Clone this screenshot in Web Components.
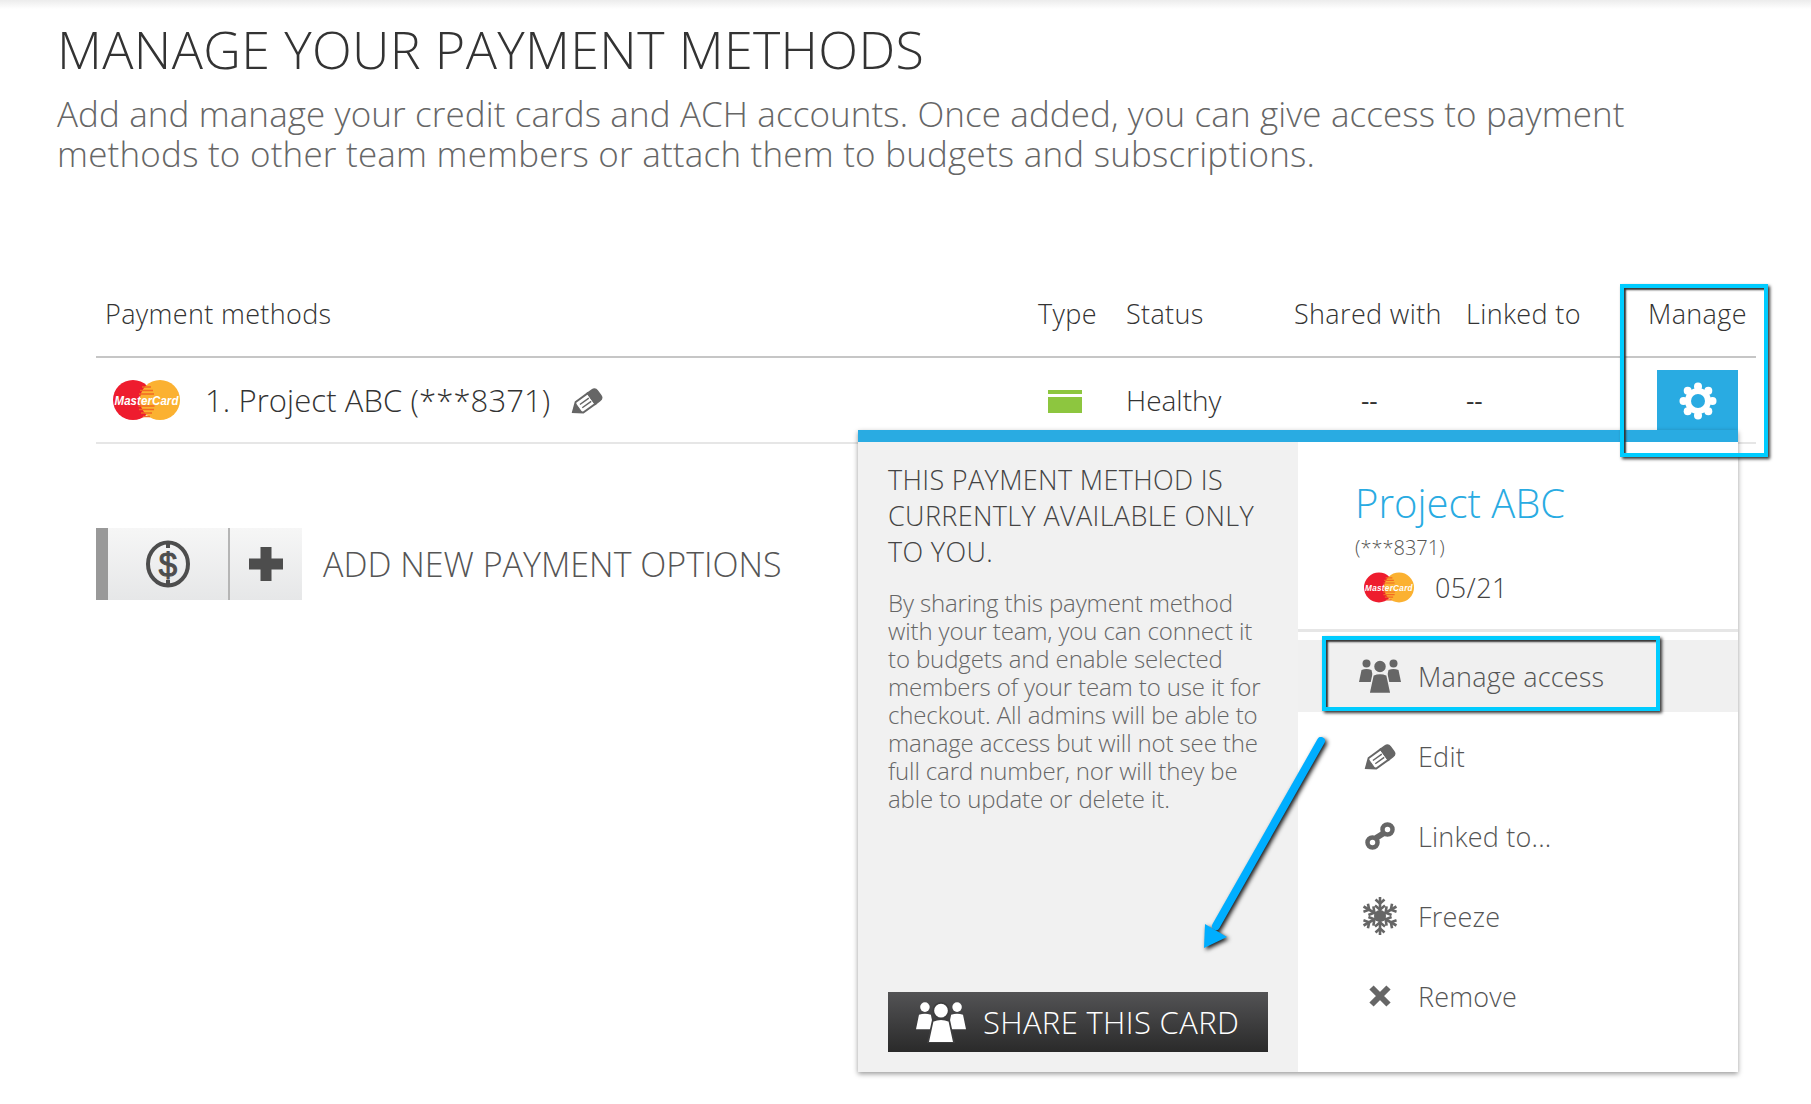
<!DOCTYPE html>
<html lang="en">
<head>
<meta charset="utf-8">
<title>Manage your payment methods</title>
<style>
  html, body { margin: 0; background: #fff; }
  body { font-family: "Open Sans", "Noto Sans", sans-serif; }
</style>
</head>
<body>
<payment-page>
  <page-header slot="header" title="MANAGE YOUR PAYMENT METHODS">
    Add and manage your credit cards and ACH accounts. Once added, you can give access to payment<br><span style="letter-spacing:0.21px">methods to other team members or attach them to budgets and subscriptions.</span>
  </page-header>
  <payment-table slot="table"></payment-table>
  <add-payment slot="add"></add-payment>
  <manage-panel slot="over"></manage-panel>
  <call-out slot="over" style="left:1620px;top:284px;width:148px;height:173px"></call-out>
  <call-out slot="over" style="left:1322px;top:636px;width:338px;height:75px"></call-out>
  <call-arrow slot="over"></call-arrow>
</payment-page>

<script>
const ICONS = {
  pencil: `<svg viewBox="0 0 32 27" width="32" height="27"><g transform="translate(2 25) rotate(-36)" stroke="currentColor" stroke-width="2" fill="none"><path d="M0 0 L8 -6.500 H23 V6.500 H8 Z"/><path d="M0 0 L7 -5 V5 Z" fill="currentColor" stroke-width="1"/><path d="M23 -6.500 H28 Q32 -6.500 32 -3 V3 Q32 6.500 28 6.500 H23 Z" fill="currentColor"/><path d="M10 -2 H21 M10 2 H21" stroke-width="1.500"/></g></svg>`,
  people: `<svg viewBox="0 0 42 34" width="100%" height="100%"><g fill="currentColor"><circle cx="7.500" cy="4.500" r="4"/><circle cx="34.500" cy="4.500" r="4"/><path d="M2.500 11 Q7.500 9 12.500 11 L15 23 H0 Z"/><path d="M29.500 11 Q34.500 9 39.500 11 L42 23 H27 Z"/><g stroke="var(--gap, #fff)" stroke-width="1.500"><circle cx="21" cy="7.500" r="6.500"/><path d="M14 16 Q21 13 28 16 L32 34.500 H10 Z"/></g></g></svg>`,
  link: `<svg viewBox="0 0 30 28" width="30" height="28"><g fill="none" stroke="currentColor" stroke-width="4.500"><circle cx="7.500" cy="20.500" r="5"/><circle cx="22.500" cy="7.500" r="5"/><path d="M11 16 L19 11" stroke-width="6"/></g></svg>`,
  snow: `<svg viewBox="-18 -20 36 40" width="36" height="40"><defs><g id="arm" fill="none" stroke="currentColor" stroke-width="2.600"><path d="M0 0 V-19"/><path d="M-4.500 -16.500 L0 -12.500 L4.500 -16.500"/><path d="M-5 -10.500 L0 -6.500 L5 -10.500"/></g></defs><use href="#arm"/><use href="#arm" transform="rotate(60)"/><use href="#arm" transform="rotate(120)"/><use href="#arm" transform="rotate(180)"/><use href="#arm" transform="rotate(240)"/><use href="#arm" transform="rotate(300)"/><circle r="6" fill="currentColor"/></svg>`,
  cross: `<svg viewBox="0 0 22 22" width="22" height="22"><path d="M2.500 2.500 L19.500 19.500 M19.500 2.500 L2.500 19.500" stroke="currentColor" stroke-width="6"/></svg>`,
  gear: `<svg viewBox="-19 -19 38 38" width="38" height="38"><g fill="#fff"><circle r="13"/><circle cy="-14.500" r="4"/><circle cy="14.500" r="4"/><circle cx="-14.500" r="4"/><circle cx="14.500" r="4"/><circle cx="-10.300" cy="-10.300" r="4"/><circle cx="10.300" cy="-10.300" r="4"/><circle cx="-10.300" cy="10.300" r="4"/><circle cx="10.300" cy="10.300" r="4"/></g><circle r="7" fill="#29abe2"/></svg>`,
};

class PmIcon extends HTMLElement {
  connectedCallback() {
    if (this.shadowRoot) return;
    this.attachShadow({ mode: "open" }).innerHTML = `
      <style>:host{ display:inline-flex; align-items:center; justify-content:center; color:#666; line-height:0; }</style>
      ${ICONS[this.getAttribute("name")] || ""}`;
  }
}
customElements.define("pm-icon", PmIcon);

class McLogo extends HTMLElement {
  connectedCallback() {
    if (this.shadowRoot) return;
    this.attachShadow({ mode: "open" }).innerHTML = `
      <style>:host{ display:inline-block; line-height:0; } svg{ width:100%; height:100%; overflow:visible; }</style>
      <svg viewBox="0 0 67 40">
        <circle cx="20" cy="20" r="20" fill="#ee1c2e"/>
        <circle cx="47" cy="20" r="20" fill="#fbb131"/>
        <g stroke="#f26a22" stroke-width="1.600">
          <path d="M29 7 H38 M27 10.500 H40 M26 14 H41 M25.500 26 H41.500 M26 29.500 H41 M28 33 H39 M30 36.500 H37"/>
        </g>
        <text x="33.500" y="25" text-anchor="middle" textLength="64" lengthAdjust="spacingAndGlyphs"
          font-family="Liberation Sans, sans-serif" font-size="13" font-weight="700" font-style="italic" fill="#fff">MasterCard</text>
      </svg>`;
  }
}
customElements.define("mc-logo", McLogo);

class PaymentPage extends HTMLElement {
  constructor() {
    super();
    this.attachShadow({ mode: "open" }).innerHTML = `
      <style>
        :host{ display:block; position:relative; height:1104px; overflow:hidden;
          background:linear-gradient(#ececec, #fff 9px) no-repeat; background-size:100% 10px; }
        .table{ padding:284px 55px 0 96px; }
        .add{ padding:84px 0 0 96px; }
      </style>
      <slot name="header"></slot>
      <div class="table"><slot name="table"></slot></div>
      <div class="add"><slot name="add"></slot></div>
      <slot name="over"></slot>`;
  }
}
customElements.define("payment-page", PaymentPage);

class PageHeader extends HTMLElement {
  constructor() {
    super();
    this.attachShadow({ mode: "open" }).innerHTML = `
      <style>
        :host{ display:block; position:absolute; left:57px; top:18px; right:0; }
        h1{ margin:0; font-size:52px; line-height:62px; font-weight:300; color:#333; letter-spacing:0.35px; white-space:nowrap; }
        p{ margin:0; padding-top:14px; font-size:35px; line-height:40px; font-weight:300; color:#666; letter-spacing:0.1px; white-space:nowrap; }
      </style>
      <h1></h1>
      <p><slot></slot></p>`;
  }
  connectedCallback() {
    this.shadowRoot.querySelector("h1").textContent = this.getAttribute("title");
  }
}
customElements.define("page-header", PageHeader);

class PaymentTable extends HTMLElement {
  constructor() {
    super();
    this.attachShadow({ mode: "open" }).innerHTML = `
      <style>
        :host{ display:block; color:#333; font-weight:300; }
        .row{ display:grid; grid-template-columns:942px 88px 168px 172px 182px 108px; align-items:center; }
        .head{ height:72px; border-bottom:2px solid #c6c6c6; font-size:27px; letter-spacing:0.35px; }
        .head > div{ padding-bottom:13px; white-space:nowrap; }
        .body{ height:84px; border-bottom:2px solid #e6e6e6; font-size:28px; }
        .first{ padding-left:9px; }
        .name{ display:flex; align-items:center; padding-left:17px; font-size:31px; letter-spacing:0.1px; white-space:nowrap; }
        mc-logo{ width:67px; height:40px; margin-right:25px; }
        .name pm-icon{ margin-left:21px; }
        .type{ padding-left:10px; }
        .swatch{ display:block; margin-top:3px; width:34px; height:23px; background:linear-gradient(#8dc63f 4px, #fff 4px, #fff 7px, #8dc63f 7px); }
        .dash{ font-weight:400; font-size:26px; }
        .shared{ padding-left:67px; }
        .gear{ align-self:start; margin:12px 0 0 9px; width:81px; height:72px; background:#29abe2; display:flex; justify-content:center; align-items:flex-start; padding-top:12px; box-sizing:border-box; }
      </style>
      <div class="row head">
        <div class="first">Payment methods</div><div>Type</div><div>Status</div><div>Shared with</div><div>Linked to</div><div>Manage</div>
      </div>
      <div class="row body">
        <div class="name"><mc-logo></mc-logo>1. Project ABC (***8371)<pm-icon name="pencil"></pm-icon></div>
        <div class="type"><span class="swatch"></span></div>
        <div>Healthy</div>
        <div class="dash shared">--</div>
        <div class="dash">--</div>
        <div class="gear"><pm-icon name="gear"></pm-icon></div>
      </div>`;
  }
}
customElements.define("payment-table", PaymentTable);

class AddPayment extends HTMLElement {
  constructor() {
    super();
    this.attachShadow({ mode: "open" }).innerHTML = `
      <style>
        :host{ display:flex; align-items:center; height:72px; color:#555; }
        .btn{ display:flex; height:72px; width:206px; box-sizing:border-box; border-left:12px solid #999; background:linear-gradient(#f6f6f6, #e6e7e8); color:#4d4d4d; }
        .coin{ width:120px; border-right:2px solid #b5b5b5; display:flex; align-items:center; justify-content:center; }
        .plus{ flex:1; display:flex; align-items:center; justify-content:center; }
        .label{ margin-left:21px; font-size:34px; font-weight:300; white-space:nowrap; }
        svg text{ font-family:"Liberation Sans", sans-serif; font-weight:400; }
      </style>
      <div class="btn">
        <div class="coin"><svg width="46" height="48" viewBox="0 0 46 48"><ellipse cx="23" cy="24" rx="20" ry="21.500" fill="none" stroke="currentColor" stroke-width="4"/><path d="M23 2 V8 M23 40 V46" stroke="currentColor" stroke-width="4"/><text x="23" y="36" font-size="33" text-anchor="middle" fill="currentColor" stroke="currentColor" stroke-width="1">$</text></svg></div>
        <div class="plus"><svg width="34" height="34" viewBox="0 0 34 34"><path d="M11.500 0 H22.500 V11.500 H34 V22.500 H22.500 V34 H11.500 V22.500 H0 V11.500 H11.500 Z" fill="currentColor"/></svg></div>
      </div>
      <span class="label">ADD NEW PAYMENT OPTIONS</span>`;
  }
}
customElements.define("add-payment", AddPayment);

class MenuItem extends HTMLElement {
  constructor() {
    super();
    this.attachShadow({ mode: "open" }).innerHTML = `
      <style>
        :host{ display:flex; align-items:center; height:72px; padding-left:52px; font-size:27px; letter-spacing:0.2px; font-weight:300; color:#555; }
        :host([active]){ background:#f0f0f0; }
        .ic{ width:60px; height:42px; display:flex; align-items:center; justify-content:center; margin-right:8px; }
      </style>
      <div class="ic"><slot name="icon"></slot></div>
      <slot></slot>`;
  }
}
customElements.define("menu-item", MenuItem);

class ManagePanel extends HTMLElement {
  constructor() {
    super();
    this.attachShadow({ mode: "open" }).innerHTML = `
      <style>
        :host{ display:flex; position:absolute; left:858px; top:430px; width:880px; height:642px; box-sizing:border-box;
          border-top:12px solid #29abe2; background:#fff; box-shadow:0 2px 5px rgba(0,0,0,.4); }
        .left{ width:440px; background:#f1f1f1; box-sizing:border-box; padding:20px 30px 20px; display:flex; flex-direction:column; }
        h2{ margin:0; font-size:27px; line-height:36px; font-weight:300; color:#444; letter-spacing:0.35px; white-space:nowrap; }
        p{ margin:19px 0 0; font-size:24px; line-height:28px; font-weight:300; color:#666; letter-spacing:-0.13px; white-space:nowrap; }
        .share{ margin-top:auto; height:60px; width:380px; box-sizing:border-box; padding-left:28px; display:flex; align-items:center;
          background:linear-gradient(#535355, #2a2a2a); color:#fff; font-size:31px; font-weight:300; letter-spacing:0.35px; white-space:nowrap; }
        .share pm-icon{ width:50px; height:42px; margin-right:17px; color:#fff; --gap:#3d3d3e; }
        .right{ flex:1; }
        .head{ border-bottom:3px solid #e6e6e6; padding:39px 0 0 57px; height:148px; }
        .title{ font-size:40px; line-height:44px; font-weight:300; color:#29abe2; white-space:nowrap; }
        .num{ margin-top:10px; font-size:20px; line-height:26px; font-weight:300; color:#555; }
        .exp{ margin-top:8px; display:flex; align-items:center; padding-left:9px; font-size:27px; letter-spacing:0.4px; font-weight:300; color:#444; }
        .exp mc-logo{ width:50px; height:31px; margin-right:21px; }
        .menu{ margin-top:8px; display:flex; flex-direction:column; gap:8px; }
        .big{ width:42px; height:34px; }
      </style>
      <div class="left">
        <h2>THIS PAYMENT METHOD IS<br>CURRENTLY AVAILABLE ONLY<br>TO YOU.</h2>
        <p>By sharing this payment method<br>with your team, you can connect it<br>to budgets and enable selected<br>members of your team to use it for<br>checkout. All admins will be able to<br>manage access but will not see the<br>full card number, nor will they be<br>able to update or delete it.</p>
        <div class="share"><pm-icon name="people"></pm-icon>SHARE THIS CARD</div>
      </div>
      <div class="right">
        <div class="head">
          <div class="title">Project ABC</div>
          <div class="num">(***8371)</div>
          <div class="exp"><mc-logo></mc-logo>05/21</div>
        </div>
        <div class="menu">
          <menu-item active><pm-icon slot="icon" class="big" name="people" style="--gap:#f0f0f0"></pm-icon>Manage access</menu-item>
          <menu-item><pm-icon slot="icon" name="pencil"></pm-icon>Edit</menu-item>
          <menu-item><pm-icon slot="icon" name="link"></pm-icon>Linked to...</menu-item>
          <menu-item><pm-icon slot="icon" name="snow"></pm-icon>Freeze</menu-item>
          <menu-item><pm-icon slot="icon" name="cross"></pm-icon>Remove</menu-item>
        </div>
      </div>`;
  }
}
customElements.define("manage-panel", ManagePanel);

class CallOut extends HTMLElement {
  constructor() {
    super();
    this.attachShadow({ mode: "open" }).innerHTML = `
      <style>
        :host{ display:block; position:absolute; box-sizing:border-box; border:4px solid #00ccff; pointer-events:none;
          box-shadow:2px 2px 3px #333, inset 2px 2px 2px #333; }
      </style>`;
  }
}
customElements.define("call-out", CallOut);

class CallArrow extends HTMLElement {
  constructor() {
    super();
    this.attachShadow({ mode: "open" }).innerHTML = `
      <style>
        :host{ display:block; position:absolute; left:1188px; top:730px; width:150px; height:230px; }
        svg{ filter:drop-shadow(2px 2px 2px rgba(0,0,0,.9)); overflow:visible; }
      </style>
      <svg width="150" height="230" viewBox="0 0 150 230">
        <path d="M133 11 L28 196" stroke="#00aeff" stroke-width="8" stroke-linecap="round" fill="none"/>
        <path d="M16 218 L17 194 L39 207 Z" fill="#00aeff"/>
      </svg>`;
  }
}
customElements.define("call-arrow", CallArrow);
</script>
</body>
</html>
